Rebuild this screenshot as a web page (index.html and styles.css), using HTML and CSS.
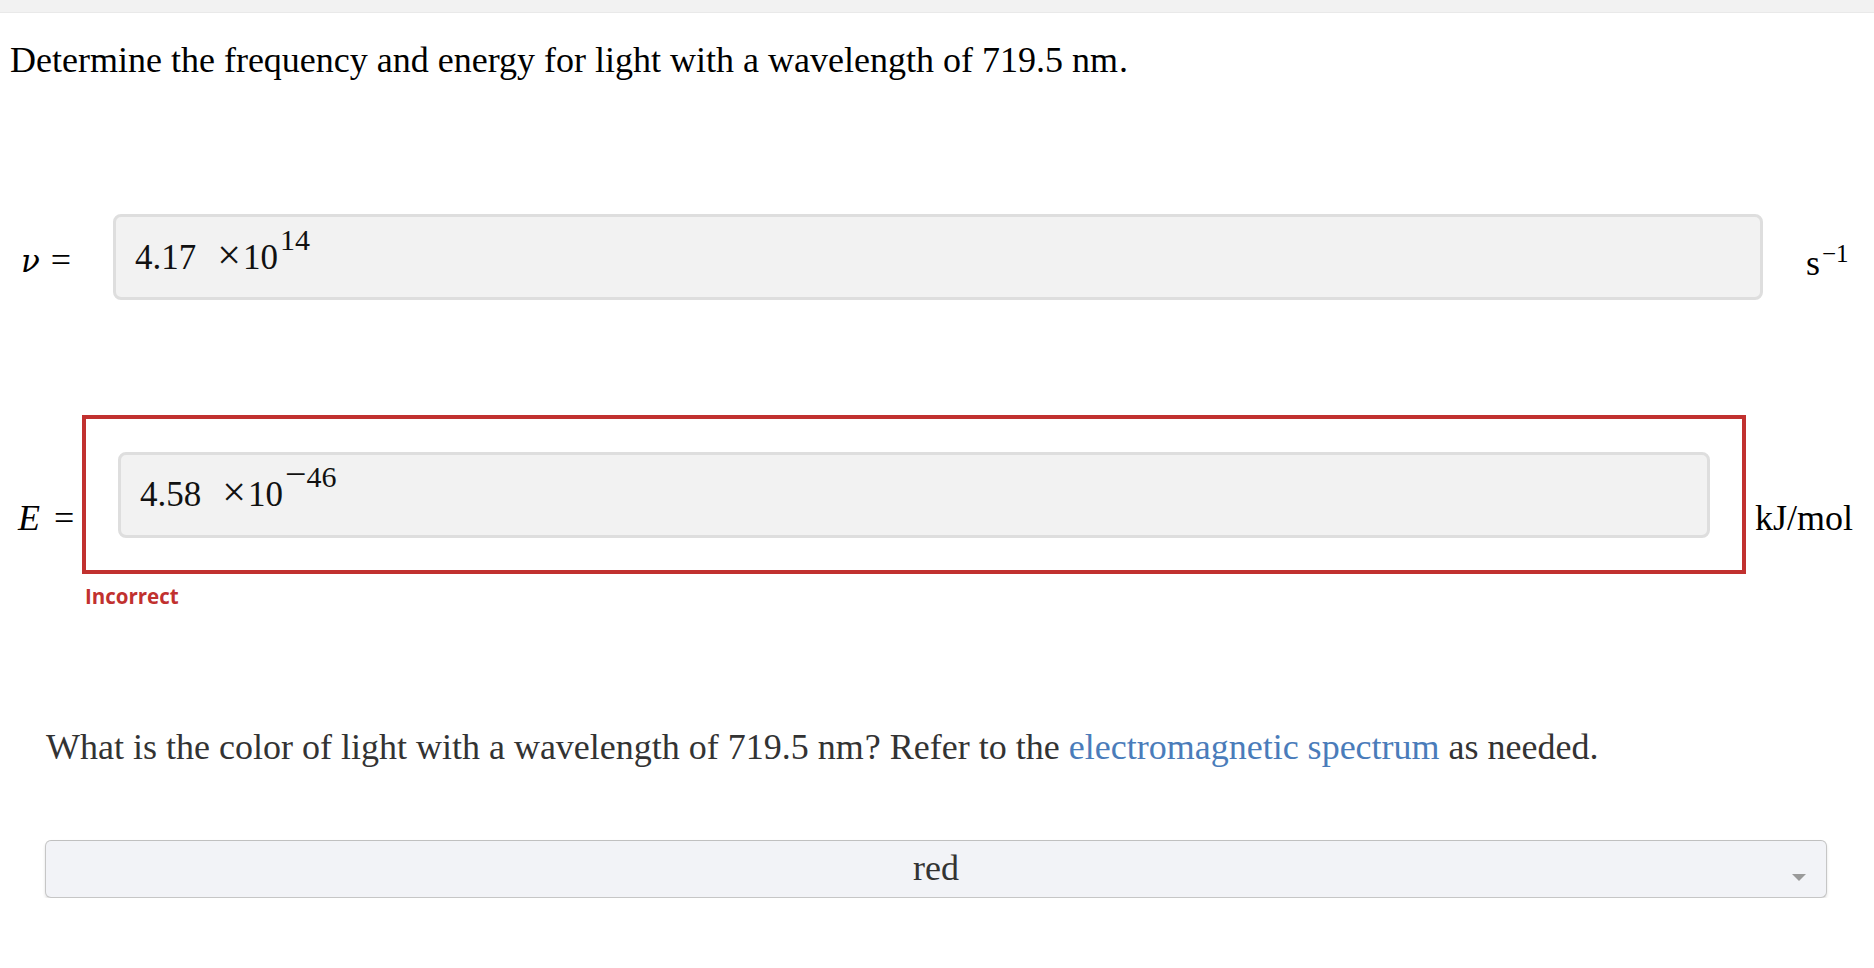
FILE: index.html
```html
<!DOCTYPE html>
<html lang="en">
<head>
<meta charset="utf-8">
<title>Frequency and energy of light</title>
<link rel="stylesheet" href="styles.css">
</head>
<body>
<div class="topbar"></div>
<main class="page">
  <p class="prompt">Determine the frequency and energy for light with a wavelength of 719.5 nm<span class="punct">.</span></p>

  <div class="row row-freq">
    <div class="label label-freq"><span class="var var-nu">ν</span><span class="eq">=</span></div>
    <div class="answer answer-freq">4.17<span class="times">×</span>10<span class="sup">14</span></div>
    <div class="unit unit-freq">s<span class="unit-sup">−1</span></div>
  </div>

  <div class="row row-energy">
    <div class="label label-energy"><span class="var">E</span><span class="eq">=</span></div>
    <div class="feedback-box">
      <div class="answer answer-energy">4.58<span class="times">×</span>10<span class="sup"><span class="minus">−</span>46</span></div>
    </div>
    <div class="unit unit-energy">kJ/mol</div>
  </div>
  <div class="incorrect">Incorrect</div>

  <p class="question">What is the color of light with a wavelength of 719.5 nm<span class="punct">?</span> Refer to the <a class="link" href="#">electromagnetic spectrum</a> as needed.</p>

  <div class="select">
    <span class="select-value">red</span>
    <span class="select-arrow"></span>
  </div>
</main>
</body>
</html>
```

FILE: styles.css
```css
html, body {
  margin: 0;
  padding: 0;
  background: #ffffff;
}

body {
  font-family: "Liberation Serif", "Times New Roman", serif;
  color: #000;
}

.topbar {
  height: 12px;
  background: #f2f2f2;
  border-bottom: 1px solid #e9e9e9;
}

.page {
  padding: 0 10px;
}

.prompt {
  margin: 26px 0 0;
  font-size: 36px;
  line-height: 42px;
  color: #000;
  white-space: nowrap;
}

.punct {
  margin-left: 1px;
}

.row {
  display: flex;
  align-items: flex-start;
}

.row-freq {
  margin-top: 133px;
}

.row-energy {
  margin-top: 115px;
}

.label {
  box-sizing: border-box;
  padding-left: 8px;
  font-size: 36px;
  line-height: 42px;
  flex: none;
  white-space: nowrap;
}

.label-freq {
  width: 103px;
  margin-top: 25px;
  padding-left: 11px;
}

.label-energy {
  width: 72px;
  margin-top: 82px;
}

.var {
  font-style: italic;
}

.var-nu {
  font-family: "DejaVu Serif", "Liberation Serif", serif;
  font-size: 31px;
}

.eq {
  margin-left: 14px;
}

.label-freq .eq {
  margin-left: 11px;
}

.answer {
  box-sizing: border-box;
  height: 86px;
  border: 3px solid #dedede;
  border-radius: 8px;
  background: #f2f2f2;
  padding: 22px 19px 0;
  font-size: 35px;
  line-height: 38px;
  color: #111;
  white-space: nowrap;
}

.answer-freq {
  width: 1650px;
  flex: none;
}

.answer-energy {
  padding-top: 19px;
}

.times {
  font-size: 42px;
  line-height: 0;
  margin-left: 21px;
  margin-right: 2px;
}

.sup {
  font-size: 30px;
  line-height: 0;
  vertical-align: 19px;
  margin-left: 2px;
}

.minus {
  font-size: 38px;
  line-height: 0;
}

.feedback-box {
  box-sizing: border-box;
  width: 1664px;
  flex: none;
  border: 4px solid #c1312f;
  padding: 33px 32px 32px;
}

.unit {
  font-size: 36px;
  line-height: 42px;
  white-space: nowrap;
  flex: none;
}

.unit-freq {
  margin-left: 43px;
  margin-top: 28px;
}

.unit-energy {
  margin-left: 9px;
  margin-top: 82px;
}

.unit-sup {
  font-size: 25px;
  line-height: 0;
  vertical-align: 13px;
  margin-left: 2px;
}

.incorrect {
  margin: 10px 0 0 75px;
  font-family: "Open Sans", "Noto Sans", sans-serif;
  font-weight: 700;
  font-size: 20.5px;
  line-height: 24px;
  color: #c1312f;
}

.question {
  margin: 118px 0 0 36px;
  font-size: 36px;
  line-height: 42px;
  color: #333;
  white-space: nowrap;
}

.link {
  color: #4a7cba;
  text-decoration: none;
}

.select {
  position: relative;
  box-sizing: border-box;
  width: 1782px;
  height: 58px;
  margin: 72px 0 0 35px;
  border: 1px solid #c6c6c6;
  border-top-color: #c0c0c0;
  border-radius: 6px;
  background: #f2f3f7;
  box-shadow: 0 2px 3px rgba(0, 0, 0, 0.12);
  text-align: center;
  font-size: 36px;
  line-height: 54px;
  color: #333;
}

.select-arrow {
  position: absolute;
  right: 20px;
  top: 33px;
  width: 0;
  height: 0;
  border-left: 7.5px solid transparent;
  border-right: 7.5px solid transparent;
  border-top: 7px solid #9a9a9a;
}
```
